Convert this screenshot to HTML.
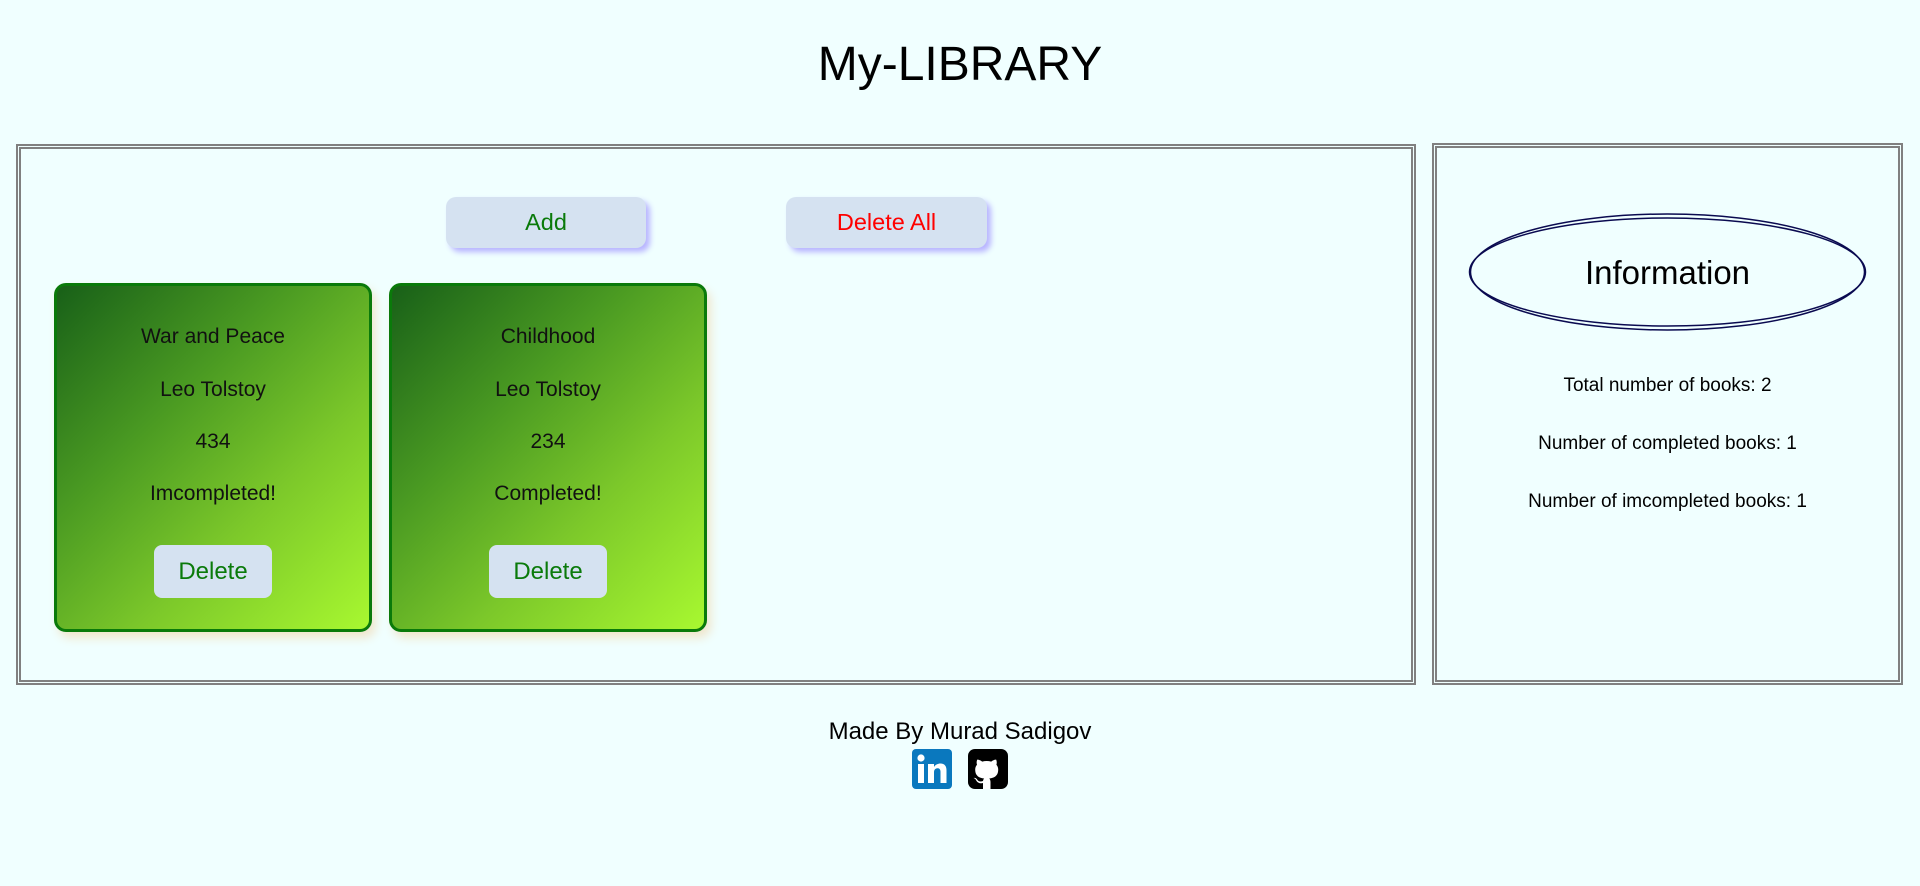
<!DOCTYPE html>
<html><head><meta charset="utf-8"><style>
*{margin:0;padding:0;box-sizing:border-box}
body{width:1920px;height:886px;background:#f0ffff;font-family:"Liberation Sans",sans-serif;position:relative;overflow:hidden}
.abs{position:absolute}
h1{position:absolute;left:0;width:1920px;top:33px;text-align:center;font-size:48px;font-weight:normal;color:#000;line-height:64px}
.box{position:absolute;border:5px double #808080}
.btn{position:absolute;background:#d5e2f1;border-radius:10px;box-shadow:4px 4px 6px #b8b4ff;text-align:center;font-size:23.5px;line-height:51px}
.card{position:absolute;top:283px;width:318px;height:349px;border:3px solid #0a7a0a;border-radius:12px;background:linear-gradient(135deg,#186018 0%,#4a9a22 35%,#7cc82a 65%,#a8f830 100%);box-shadow:4px 6px 10px #f0e6cc;text-align:center;font-size:21px;color:#111}
.card p{position:absolute;left:0;width:100%;line-height:26px}
.del{position:absolute;left:97px;top:259px;width:118px;height:53px;background:#d5e2f1;border-radius:8px;color:#0a7a0a;font-size:24px;line-height:53px}
.info{position:absolute;left:1432px;width:471px;text-align:center;font-size:19px;color:#000}
</style></head><body>
<h1>My-LIBRARY</h1>
<div class="box" style="left:16px;top:144px;width:1400px;height:541px"></div>
<div class="box" style="left:1432px;top:143px;width:471px;height:542px"></div>
<div class="btn" style="left:446px;top:197px;width:200px;height:51px;color:#0a7a0a">Add</div>
<div class="btn" style="left:786px;top:197px;width:201px;height:51px;color:#f00">Delete All</div>
<div class="card" style="left:54px">
<p style="top:38px">War and Peace</p><p style="top:91px">Leo Tolstoy</p><p style="top:143px">434</p><p style="top:195px">Imcompleted!</p>
<div class="del">Delete</div></div>
<div class="card" style="left:389px">
<p style="top:38px">Childhood</p><p style="top:91px">Leo Tolstoy</p><p style="top:143px">234</p><p style="top:195px">Completed!</p>
<div class="del">Delete</div></div>
<svg class="abs" style="left:1465px;top:208px" width="405" height="130"><ellipse cx="202.5" cy="64" rx="198" ry="54" fill="none" stroke="#0a0a50" stroke-width="1.5"/><ellipse cx="202.5" cy="64" rx="197" ry="58" fill="none" stroke="#0a0a50" stroke-width="1.5"/></svg>
<div class="info" style="top:254px;font-size:33px">Information</div>
<div class="info" style="top:375px">Total number of books: 2</div>
<div class="info" style="top:433px">Number of completed books: 1</div>
<div class="info" style="top:491px">Number of imcompleted books: 1</div>
<div class="abs" style="left:0;width:1920px;top:718px;text-align:center;font-size:24px">Made By Murad Sadigov</div>
<svg class="abs" style="left:912px;top:749px" width="40" height="40" viewBox="0 0 40 40"><rect width="40" height="40" rx="4" fill="#0a78be"/><rect x="6" y="15" width="6" height="19" fill="#fff"/><circle cx="9" cy="9" r="3.6" fill="#fff"/><path d="M16 15h6v3c1.5-2.5 4-3.5 6.5-3.5 4 0 6 2.5 6 7V34h-6V23c0-2.5-1-3.8-3-3.8s-3.5 1.4-3.5 4V34h-6z" fill="#fff"/></svg>
<svg class="abs" style="left:968px;top:749px" width="40" height="40" viewBox="0 0 40 40"><rect width="40" height="40" rx="7" fill="#000"/><path d="M15 40v-6c-4 1-6-1-7-3-.6-1-1.5-1.7-2.5-2 2-.5 3 .5 4 2 1 1.5 3 2 5.5 1 .2-1.2.6-2 1.2-2.5-5-.6-9-2.5-9-9 0-2 .7-3.6 1.8-4.8-.2-.5-.8-2.5.2-5 0 0 1.6-.5 5 1.9a17 17 0 0 1 9 0c3.4-2.4 5-1.9 5-1.9 1 2.5.4 4.5.2 5 1.1 1.2 1.8 2.8 1.8 4.8 0 6.5-4 8.4-9 9 .7.6 1.3 1.8 1.3 3.5V40z" fill="#fff"/></svg>
</body></html>
